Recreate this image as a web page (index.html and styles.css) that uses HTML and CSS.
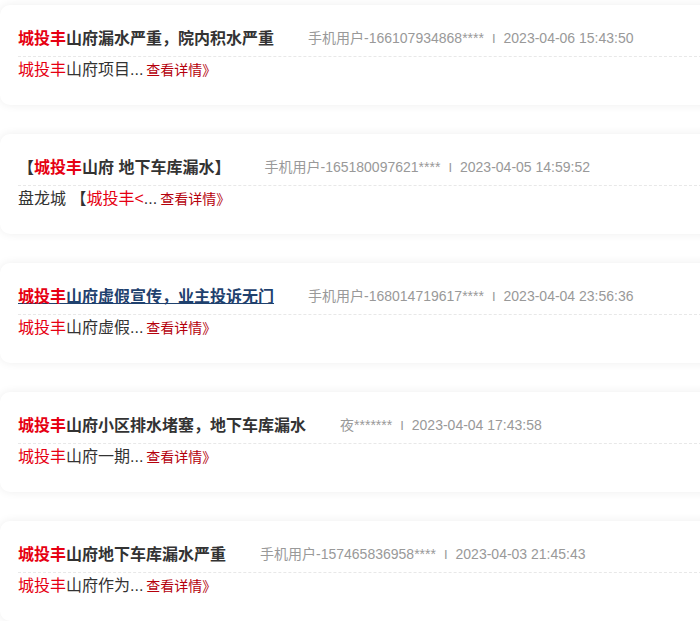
FILE: index.html
```html
<!DOCTYPE html>
<html lang="zh-CN">

<head>
    <meta charset="UTF-8">
    <meta name="viewport" content="width=device-width, initial-scale=1.0">
    <title>投诉列表</title>
    <link rel="stylesheet" href="styles.css">
</head>

<body>
    <div class="list">
        <div class="card">
            <div class="card-top">
                <a class="title"><em>城投丰</em>山府漏水严重，院内积水严重</a>
                <span class="meta">手机用户-166107934868****<i class="sep">I</i>2023-04-06 15:43:50</span>
            </div>
            <div class="card-body">
                <em>城投丰</em>山府项目...<a class="more">查看详情》</a>
            </div>
        </div>

        <div class="card">
            <div class="card-top">
                <a class="title">【<em>城投丰</em>山府 地下车库漏水】</a>
                <span class="meta">手机用户-165180097621****<i class="sep">I</i>2023-04-05 14:59:52</span>
            </div>
            <div class="card-body">
                盘龙城 【<em>城投丰&lt;</em>...<a class="more">查看详情》</a>
            </div>
        </div>

        <div class="card">
            <div class="card-top">
                <a class="title hover"><em>城投丰</em>山府虚假宣传，业主投诉无门</a>
                <span class="meta">手机用户-168014719617****<i class="sep">I</i>2023-04-04 23:56:36</span>
            </div>
            <div class="card-body">
                <em>城投丰</em>山府虚假...<a class="more">查看详情》</a>
            </div>
        </div>

        <div class="card">
            <div class="card-top">
                <a class="title"><em>城投丰</em>山府小区排水堵塞，地下车库漏水</a>
                <span class="meta">夜*******<i class="sep">I</i>2023-04-04 17:43:58</span>
            </div>
            <div class="card-body">
                <em>城投丰</em>山府一期...<a class="more">查看详情》</a>
            </div>
        </div>

        <div class="card">
            <div class="card-top">
                <a class="title"><em>城投丰</em>山府地下车库漏水严重</a>
                <span class="meta">手机用户-157465836958****<i class="sep">I</i>2023-04-03 21:45:43</span>
            </div>
            <div class="card-body">
                <em>城投丰</em>山府作为...<a class="more">查看详情》</a>
            </div>
        </div>
    </div>
</body>

</html>
```

FILE: styles.css
```css
body {
    margin: 0;
    background: #fff;
    font-family: "Liberation Sans", "Noto Sans CJK SC", sans-serif;
    overflow: hidden;
}

.list {
    display: flex;
    flex-direction: column;
    gap: 29px;
    padding-top: 5px;
    margin-right: -30px;
}

.card {
    background: #fff;
    border-radius: 10px;
    box-shadow: 0 0 10px rgba(0, 0, 0, 0.07);
    padding: 17px 18px 22px 18px;
}

.card-top {
    display: flex;
    align-items: center;
    height: 30px;
    padding-bottom: 4px;
    border-bottom: 1px dashed #e8e8e8;
}

.title {
    font-size: 16px;
    font-weight: bold;
    color: #333;
    margin-right: 34px;
    white-space: nowrap;
}

.title em,
.card-body em {
    font-style: normal;
    color: #e60012;
}

.title.hover {
    color: #1f416e;
    text-decoration: underline;
}

.meta {
    font-size: 14px;
    color: #999;
    white-space: nowrap;
}

.sep {
    font-style: normal;
    margin: 0 8px;
    font-size: 13px;
}

.card-body {
    font-size: 16px;
    line-height: 26px;
    color: #333;
}

.more {
    font-size: 14px;
    color: #b5000b;
    margin-left: 3px;
}
```
